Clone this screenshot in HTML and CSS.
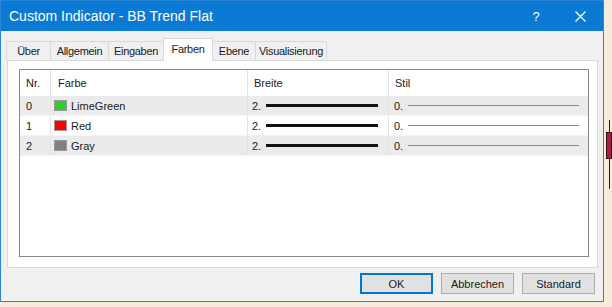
FILE: index.html
```html
<!DOCTYPE html>
<html lang="de">

<head>
    <meta charset="UTF-8">
    <meta name="viewport" content="width=device-width, initial-scale=1.0">
    <title>Custom Indicator - BB Trend Flat</title>
    <link rel="stylesheet" href="styles.css">
</head>

<body>
    <section class="window">
        <div class="titlebar">
            <span class="title">Custom Indicator - BB Trend Flat</span>
            <span class="tb-btn tb-help">?</span>
            <span class="tb-btn tb-close">
                <svg width="11" height="11" viewBox="0 0 11 11">
                    <path d="M0.5 0.5 L10.5 10.5 M10.5 0.5 L0.5 10.5" stroke="#fff" stroke-width="1.2" fill="none" />
                </svg>
            </span>
        </div>

        <div class="tabs">
            <span class="tab tab-ueber">Über</span>
            <span class="tab tab-allg">Allgemein</span>
            <span class="tab tab-eing">Eingaben</span>
            <span class="tab tab-farben tab-active">Farben</span>
            <span class="tab tab-ebene">Ebene</span>
            <span class="tab tab-vis">Visualisierung</span>
        </div>

        <div class="panel">
            <div class="list">
                <div class="row row-head">
                    <div class="cell c-nr">Nr.</div>
                    <div class="cell c-farbe">Farbe</div>
                    <div class="cell c-breite">Breite</div>
                    <div class="cell c-stil">Stil</div>
                </div>
                <div class="row row-alt">
                    <div class="cell c-nr">0</div>
                    <div class="cell c-farbe"><span class="swatch" style="background:#32cd32"></span>LimeGreen</div>
                    <div class="cell c-breite">2.<span class="line-thick"></span></div>
                    <div class="cell c-stil">0.<span class="line-thin"></span></div>
                </div>
                <div class="row">
                    <div class="cell c-nr">1</div>
                    <div class="cell c-farbe"><span class="swatch" style="background:#ff0000"></span>Red</div>
                    <div class="cell c-breite">2.<span class="line-thick"></span></div>
                    <div class="cell c-stil">0.<span class="line-thin"></span></div>
                </div>
                <div class="row row-alt">
                    <div class="cell c-nr">2</div>
                    <div class="cell c-farbe"><span class="swatch" style="background:#808080"></span>Gray</div>
                    <div class="cell c-breite">2.<span class="line-thick"></span></div>
                    <div class="cell c-stil">0.<span class="line-thin"></span></div>
                </div>
            </div>
        </div>

        <div class="footer">
            <span class="btn btn-default">OK</span>
            <span class="btn">Abbrechen</span>
            <span class="btn">Standard</span>
        </div>
    </section>

    <!-- Rand des Charts hinter dem Dialog -->
    <div class="chart">
        <div class="candle">
            <span class="wick"></span>
            <span class="body"></span>
            <span class="wick wick-low"></span>
        </div>
    </div>
</body>

</html>
```

FILE: styles.css
```css
* {
    padding: 0;
    margin: 0;
    box-sizing: border-box;
}

body {
    width: 612px;
    height: 307px;
    overflow: hidden;
    background: #f5edda;
    display: flex;
    align-items: flex-start;
    font-family: "Liberation Sans", Arial, sans-serif;
    font-size: 11px;
    color: #1a1a1a;
}

/* Dialog */
.window {
    width: 604px;
    height: 302px;
    border: 1px solid #2a86d6;
    background: #f0f0f0;
    display: flex;
    flex-direction: column;
    flex-shrink: 0;
}

.titlebar {
    height: 30px;
    background: #0b7ad5;
    color: #fff;
    display: flex;
    align-items: center;
    padding-left: 8px;
}

.title {
    font-size: 14px;
    flex: 1;
}

.tb-btn {
    width: 44px;
    height: 30px;
    display: flex;
    align-items: center;
    justify-content: center;
}

.tb-help {
    font-size: 13px;
}

.tb-close {
    margin-right: 1px;
}

/* Reiter */
.tabs {
    height: 29px;
    padding: 6px 0 0 5px;
    display: flex;
    align-items: flex-end;
    letter-spacing: -0.3px;
}

.tab {
    height: 19px;
    border: 1px solid #d9d9d9;
    border-bottom: none;
    border-right: none;
    background: #f0f0f0;
    display: flex;
    align-items: center;
    justify-content: center;
    white-space: nowrap;
}

.tab-vis {
    border-right: 1px solid #d9d9d9;
}

.tab-ueber { width: 44px; }
.tab-allg { width: 58px; }
.tab-eing { width: 55px; }
.tab-ebene { width: 42px; }
.tab-vis { width: 72px; }

.tab-active {
    width: 50px;
    height: 23px;
    margin-bottom: -1px;
    background: #fff;
    border-right: 1px solid #d9d9d9;
    position: relative;
    z-index: 1;
    padding-bottom: 2px;
}

.tab-active + .tab {
    border-left: none;
}

.panel {
    height: 208px;
    margin: 0 5px 0 6px;
    border: 1px solid #d9d9d9;
    background: #fff;
    padding: 8px 8px 9px 11px;
}

/* Liste */
.list {
    height: 188px;
    border: 1px solid #828790;
    background: #fff;
}

.row {
    display: flex;
    height: 20px;
    border-bottom: 1px solid #f4f4f4;
}

.row-head {
    height: 26px;
    border-bottom: none;
}

.row-alt {
    background: #ebebeb;
}

.cell {
    display: flex;
    align-items: center;
    border-right: 1px solid #e3e3e3;
    white-space: nowrap;
    padding-left: 6px;
}

.c-nr { width: 31px; }
.c-farbe { width: 197px; padding-left: 3px; }
.c-breite { width: 141px; padding-left: 4px; }
.c-stil { flex: 1; border-right: none; padding-left: 5px; }

.row-head .c-farbe { padding-left: 7px; }
.row-head .c-breite { padding-left: 6px; }
.row-head .c-stil { padding-left: 6px; }

.swatch {
    width: 13px;
    height: 11px;
    margin-right: 4px;
    border: 1px solid #9a9a9a;
}

.line-thick {
    width: 112px;
    height: 3px;
    margin-left: 5px;
    background: #111;
}

.line-thin {
    width: 171px;
    height: 1px;
    margin-left: 5px;
    background: #8a8a8a;
}

/* Schaltflaechen */
.footer {
    flex: 1;
    display: flex;
    justify-content: flex-end;
    gap: 8px;
    padding: 5px 8px 0 0;
}

.btn {
    width: 73px;
    height: 21px;
    background: #e1e1e1;
    border: 1px solid #adadad;
    display: flex;
    align-items: center;
    justify-content: center;
}

.btn-default {
    border: 1px solid #0078d7;
    box-shadow: 0 0 0 1px #0078d7 inset;
}

/* Kerze am Rand */
.chart {
    flex: 1;
    height: 307px;
    padding-top: 120px;
    padding-left: 2px;
}

.candle {
    width: 6px;
    display: flex;
    flex-direction: column;
    align-items: center;
}

.wick {
    width: 1px;
    height: 12px;
    background: #222;
}

.wick-low {
    height: 30px;
}

.candle .body {
    width: 6px;
    height: 27px;
    background: #a8203f;
    border: 1px solid #3a0a14;
}
```
